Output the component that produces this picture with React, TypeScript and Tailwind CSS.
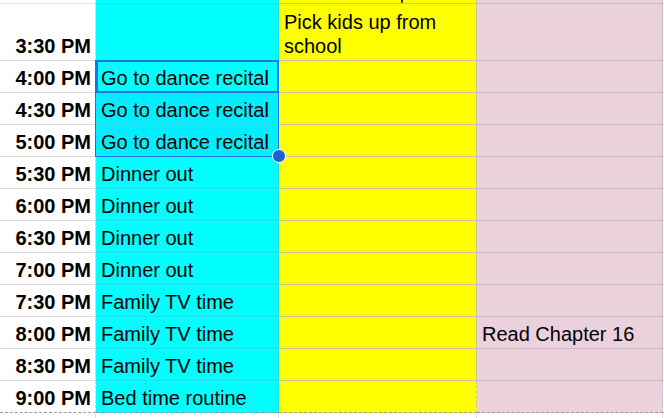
const ROWS: { time: string; a: string; b: string; c: string }[] = [
	{ time: "4:00 PM", a: "Go to dance recital", b: "", c: "" },
	{ time: "4:30 PM", a: "Go to dance recital", b: "", c: "" },
	{ time: "5:00 PM", a: "Go to dance recital", b: "", c: "" },
	{ time: "5:30 PM", a: "Dinner out", b: "", c: "" },
	{ time: "6:00 PM", a: "Dinner out", b: "", c: "" },
	{ time: "6:30 PM", a: "Dinner out", b: "", c: "" },
	{ time: "7:00 PM", a: "Dinner out", b: "", c: "" },
	{ time: "7:30 PM", a: "Family TV time", b: "", c: "" },
	{ time: "8:00 PM", a: "Family TV time", b: "", c: "Read Chapter 16" },
	{ time: "8:30 PM", a: "Family TV time", b: "", c: "" },
	{ time: "9:00 PM", a: "Bed time routine", b: "", c: "" },
];

const cell = "flex items-end pl-[5px] pb-[2px] leading-[24px] whitespace-nowrap overflow-hidden";

export default function App() {
	return (
		<div
			className="relative h-[418px] w-[664px] overflow-hidden bg-white text-[20px] text-black"
			style={{ fontFamily: '"Liberation Sans", Arial, sans-serif' }}
		>
			<div className="grid grid-cols-[96px_183px_198px_186px_1fr]">
				{/* row above, cut off */}
				<div className="h-[4px] border-b border-r border-[#e2e2e2]" />
				<div className="h-[4px] border-b border-r border-[#1de4e4] bg-[#00ffff]" />
				<div className="relative h-[4px] border-b border-r border-[#c9c39a] bg-[#ffff00]">
					<span className="absolute left-[122px] top-0 h-[3px] w-[2px] rounded-b-full bg-[#222]" />
				</div>
				<div className="h-[4px] border-b border-r border-[#c8b9c0] bg-[#ead1dc]" />
				<div className="h-[4px] border-b border-[#e2e2e2]" />

				{/* tall row */}
				<div className="flex h-[57px] items-end justify-end border-b border-r border-[#dadada] pr-[4px] pb-[2px] font-bold leading-[24px]">
					3:30 PM
				</div>
				<div className="h-[57px] border-b border-r border-[#1de4e4] bg-[#00ffff]" />
				<div className="flex h-[57px] items-end border-b border-r border-[#c9c39a] bg-[#ffff00] pl-[5px] pb-[2px] leading-[24px]">
					Pick kids up from school
				</div>
				<div className="h-[57px] border-b border-r border-[#c8b9c0] bg-[#ead1dc]" />
				<div className="h-[57px] border-b border-[#e2e2e2]" />

				{ROWS.map((r, i) => {
					const last = i === ROWS.length - 1;
					const line = last ? "border-b border-dashed border-b-[#9a9a9a]" : "border-b";
					const picked = i === 1 || i === 2;
					return [
						<div
							key={`t${i}`}
							className={`flex h-[32px] items-end justify-end border-r border-[#dadada] pr-[4px] pb-[2px] font-bold leading-[24px] ${line}`}
						>
							{r.time}
						</div>,
						<div
							key={`a${i}`}
							className={`${cell} h-[32px] border-r border-[#1de4e4] ${line} ${picked ? "bg-[#03eefc]" : "bg-[#00ffff]"}`}
						>
							{r.a}
						</div>,
						<div
							key={`b${i}`}
							className={`${cell} h-[32px] border-r border-[#c9c39a] bg-[#ffff00] ${line}`}
						>
							{r.b}
						</div>,
						<div
							key={`c${i}`}
							className={`${cell} h-[32px] border-r border-[#c8b9c0] bg-[#ead1dc] ${line}`}
						>
							{r.c}
						</div>,
						<div key={`e${i}`} className={`h-[32px] border-[#e2e2e2] ${line}`} />,
					];
				})}

				{/* rows below print area */}
				<div className="h-[10px] border-r border-[#e2e2e2]" />
				<div className="h-[10px] border-r border-[#e2e2e2]" />
				<div className="h-[10px] border-r border-[#e2e2e2]" />
				<div className="h-[10px] border-r border-[#e2e2e2]" />
				<div className="h-[10px]" />
			</div>

			{/* selection range */}
			<div className="pointer-events-none absolute left-[95px] top-[60px] h-[97px] w-[184px] border border-[#1a73e8]" />
			<div className="pointer-events-none absolute left-[96px] top-[60px] h-[33px] w-[183px] border-2 border-[#1a73e8]" />
			<div className="pointer-events-none absolute left-[272px] top-[149px] h-[14px] w-[14px] rounded-full border-[1.5px] border-white bg-[#1a5fd6]" />
		</div>
	);
}
